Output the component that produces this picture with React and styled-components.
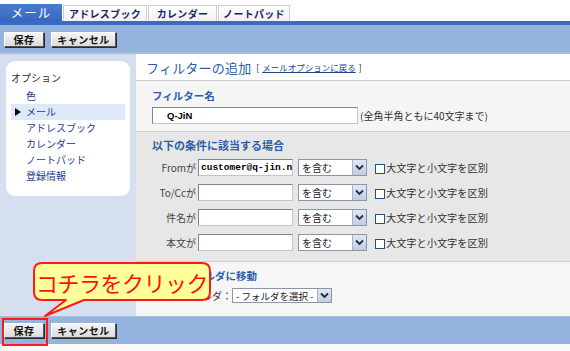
import React from 'react'
import styled, { createGlobalStyle } from 'styled-components'

const Global = createGlobalStyle`
  html, body { margin: 0; padding: 0; background: #fff; }
  body {
    width: 570px;
    height: 351px;
    overflow: hidden;
    font-family: "Noto Sans CJK JP", "Liberation Sans", sans-serif;
    color: #222;
  }
  * { box-sizing: border-box; }
`

const Page = styled.div`
  position: relative;
  width: 570px;
  height: 351px;
  display: flex;
  flex-direction: column;
  background: #f2f2f2;
`

const TabBar = styled.div`
  height: 21px;
  background: #fff;
  display: flex;
  align-items: flex-end;
`

const Tab = styled.div`
  width: ${p => p.w}px;
  height: ${p => (p.active ? 17 : 16)}px;
  display: flex;
  align-items: center;
  justify-content: center;
  font-size: ${p => (p.active ? 12.5 : 10)}px;
  font-weight: ${p => (p.active ? 400 : 700)};
  color: ${p => (p.active ? '#fff' : '#16276e')};
  background: ${p => (p.active ? 'linear-gradient(#4a7dd0, #3768bf)' : 'linear-gradient(#fff, #f1f1f1)')};
  border: ${p => (p.active ? 'none' : '1px solid #cfcfcf')};
  border-bottom: none;
  margin-right: 1px;
  letter-spacing: ${p => (p.active ? 1 : 0.3)}px;
`

const Stripe = styled.div`
  height: 4px;
  background: #3a6bc3;
`

const Toolbar = styled.div`
  height: ${p => p.h}px;
  background: #94b3df;
  display: flex;
  align-items: ${p => (p.bottom ? 'center' : 'flex-start')};
  padding: ${p => (p.bottom ? '0 0 0 4px' : '7px 0 0 4px')};
  gap: 7px;
  border-bottom: ${p => (p.bottom ? 'none' : '2px solid #aabddc')};
  border-top: ${p => (p.bottom ? '1px solid #a7bde0' : 'none')};
`

const Button = styled.div`
  width: ${p => p.w}px;
  height: 15px;
  display: flex;
  align-items: center;
  justify-content: center;
  background: linear-gradient(#f4f4f4, #dcdcdc);
  border: 1px solid;
  border-color: #fff #555 #555 #fff;
  box-shadow: 1px 1px 0 #2c2c2c;
  font-size: 10px;
  font-weight: 700;
  color: #111;
  letter-spacing: 0.5px;
`

const Body = styled.div`
  height: 262px;
  display: flex;
`

const Sidebar = styled.div`
  width: 136px;
  background: #d6dff0;
  padding: 7px 6px 0 6px;
`

const Panel = styled.div`
  height: 135px;
  background: #fff;
  border-radius: 9px;
  padding: 9px 5px 0 5px;
  font-size: 10px;
`

const PanelTitle = styled.div`
  height: 16px;
  line-height: 16px;
  color: #333;
  margin-bottom: 2px;
`

const MenuItem = styled.div`
  height: 16px;
  line-height: 16px;
  padding-left: 15px;
  position: relative;
  color: #23408f;
  background: ${p => (p.selected ? '#dde8f8' : 'transparent')};
  &::before {
    content: '';
    display: ${p => (p.selected ? 'block' : 'none')};
    position: absolute;
    left: 4px;
    top: 4px;
    border-left: 6px solid #000;
    border-top: 4px solid transparent;
    border-bottom: 4px solid transparent;
  }
`

const Main = styled.div`
  flex: 1;
  display: flex;
  flex-direction: column;
`

const Header = styled.div`
  height: 27px;
  background: #fff;
  border-bottom: 1px solid #c9c9c9;
  display: flex;
  align-items: center;
  padding-left: 10px;
  gap: 5px;
`

const Title = styled.span`
  font-size: 13px;
  color: #2d5ea8;
  letter-spacing: 0.2px;
`

const Back = styled.span`
  font-size: 8.5px;
  color: #222;
  a {
    color: #23408f;
    text-decoration: underline;
    margin: 0 3px;
  }
`

const Section = styled.div`
  height: ${p => p.h}px;
  flex: ${p => (p.h ? 'none' : 1)};
  background: ${p => p.bg};
  border-bottom: ${p => (p.h ? '1px solid #cfcfcf' : 'none')};
  padding: ${p => p.pad};
`

const SectionTitle = styled.div`
  font-size: ${p => p.size || 10.5}px;
  font-weight: 700;
  color: #2d5ea8;
  line-height: 14px;
`

const NameRow = styled.div`
  display: flex;
  align-items: center;
  margin-top: 4px;
  font-size: 10px;
  color: #333;
`

const TextBox = styled.div`
  width: ${p => p.w}px;
  height: 17px;
  background: #fff;
  border: 1px solid #7c8794;
  border-right-color: #c5c5c5;
  border-bottom-color: #c5c5c5;
  padding-left: ${p => p.pad || 2}px;
  display: flex;
  align-items: center;
  font-family: ${p => (p.mono ? '"Liberation Mono", monospace' : '"Liberation Sans", sans-serif')};
  font-size: 9.5px;
  font-weight: 700;
  color: #000;
  white-space: nowrap;
  overflow: hidden;
`

const Hint = styled.span`
  margin-left: 2px;
  font-size: 10px;
  color: #333;
`

const CondList = styled.div`
  display: flex;
  flex-direction: column;
  gap: 8px;
  margin-top: 7px;
`

const CondRow = styled.div`
  display: flex;
  align-items: center;
  height: 17px;
`

const CondLabel = styled.div`
  width: 46px;
  text-align: right;
  font-size: 10px;
  color: #444;
  padding-right: 2px;
`

const SelectBox = styled.div`
  width: ${p => p.w}px;
  height: ${p => p.h || 17}px;
  margin-left: ${p => p.ml || 0}px;
  background: #fff;
  border: 1px solid #8a97a8;
  display: flex;
  align-items: center;
  justify-content: space-between;
  padding-left: 3px;
  font-size: ${p => p.fs || 10}px;
  color: #222;
  white-space: nowrap;
  span { overflow: hidden; }
`

const Arrow = styled.div`
  flex: none;
  width: 14px;
  height: 100%;
  background: linear-gradient(#e2e8f3, #c3cde0);
  border-left: 1px solid #a6b3c8;
  display: flex;
  align-items: center;
  justify-content: center;
`

const Check = styled.div`
  width: 10px;
  height: 10px;
  margin-left: 8px;
  margin-top: 3px;
  border: 1px solid #1f4f85;
  background: #fff;
`

const CheckText = styled.span`
  font-size: 10.2px;
  color: #333;
  margin-left: 1px;
`

const FolderRow = styled.div`
  display: flex;
  align-items: center;
  margin-top: 5px;
  font-size: 10px;
  color: #333;
  white-space: nowrap;
`

const Footer = styled.div`
  flex: 1;
  background: #fafafa;
`

const Callout = styled.div`
  position: absolute;
  left: 32px;
  top: 261px;
  width: 182px;
  height: 58px;
`

const CalloutText = styled.span`
  position: absolute;
  left: 0;
  top: 2px;
  width: 180px;
  height: 37px;
  display: flex;
  align-items: center;
  justify-content: center;
  font-size: 22px;
  color: #ff1010;
  letter-spacing: -0.5px;
`

const Marker = styled.div`
  position: absolute;
  left: 2px;
  top: 318px;
  width: 46px;
  height: 28px;
  border: 2px solid #ff1a1a;
`

const Chevron = () => (
  <svg width="9" height="7" viewBox="0 0 9 7">
    <path d="M1 1.5 L4.5 5 L8 1.5" fill="none" stroke="#1c2c55" strokeWidth="1.8" />
  </svg>
)

const Select = ({ w, h, ml, fs, children }) => (
  <SelectBox w={w} h={h} ml={ml} fs={fs}>
    <span>{children}</span>
    <Arrow>
      <Chevron />
    </Arrow>
  </SelectBox>
)

const conditions = [
  { label: 'Fromが', value: 'customer@q-jin.n' },
  { label: 'To/Ccが', value: '' },
  { label: '件名が', value: '' },
  { label: '本文が', value: '' },
]

const menu = ['色', 'メール', 'アドレスブック', 'カレンダー', 'ノートパッド', '登録情報']

const Buttons = () => (
  <>
    <Button w={40}>保存</Button>
    <Button w={65}>キャンセル</Button>
  </>
)

export default function App() {
  return (
    <Page>
      <Global />
      <TabBar>
        <Tab w={62} active>メール</Tab>
        <Tab w={84}>アドレスブック</Tab>
        <Tab w={69}>カレンダー</Tab>
        <Tab w={72}>ノートパッド</Tab>
      </TabBar>
      <Stripe />
      <Toolbar h={29}>
        <Buttons />
      </Toolbar>
      <Body>
        <Sidebar>
          <Panel>
            <PanelTitle>オプション</PanelTitle>
            {menu.map(m => (
              <MenuItem key={m} selected={m === 'メール'}>{m}</MenuItem>
            ))}
          </Panel>
        </Sidebar>
        <Main>
          <Header>
            <Title>フィルターの追加</Title>
            <Back>[<a>メールオプションに戻る</a>]</Back>
          </Header>
          <Section h={51} bg="#f5f5f5" pad="8px 0 0 16px">
            <SectionTitle>フィルター名</SectionTitle>
            <NameRow>
              <TextBox w={206} pad={14}>Q-JiN</TextBox>
              <Hint>(全角半角ともに40文字まで)</Hint>
            </NameRow>
          </Section>
          <Section h={130} bg="#e7e7e7" pad="6px 0 0 16px">
            <SectionTitle size={11}>以下の条件に該当する場合</SectionTitle>
            <CondList>
              {conditions.map(c => (
                <CondRow key={c.label}>
                  <CondLabel>{c.label}</CondLabel>
                  <TextBox w={95} mono>{c.value}</TextBox>
                  <Select w={69} ml={5}>を含む</Select>
                  <Check />
                  <CheckText>大文字と小文字を区別</CheckText>
                </CondRow>
              ))}
            </CondList>
          </Section>
          <Section bg="#f6f6f6" pad="7px 0 0 16px">
            <SectionTitle>指定のフォルダに移動</SectionTitle>
            <FolderRow>
              <span>移動先フォルダ：</span>
              <Select w={100} h={15} ml={0} fs={9.5}>- フォルダを選択 -</Select>
            </FolderRow>
          </Section>
        </Main>
      </Body>
      <Toolbar h={28} bottom>
        <Buttons />
      </Toolbar>
      <Footer />
      <Marker />
      <Callout>
        <svg width="182" height="58" viewBox="0 0 182 58" style={{ position: 'absolute', left: 0, top: 0 }}>
          <path
            d="M10 2 H170 Q178 2 178 10 V31 Q178 39 170 39 H52 L13 55 L34 39 H10 Q2 39 2 31 V10 Q2 2 10 2 Z"
            fill="#ffff99"
            stroke="#ff1a1a"
            strokeWidth="2"
            strokeLinejoin="round"
          />
        </svg>
        <CalloutText>コチラをクリック</CalloutText>
      </Callout>
    </Page>
  )
}
